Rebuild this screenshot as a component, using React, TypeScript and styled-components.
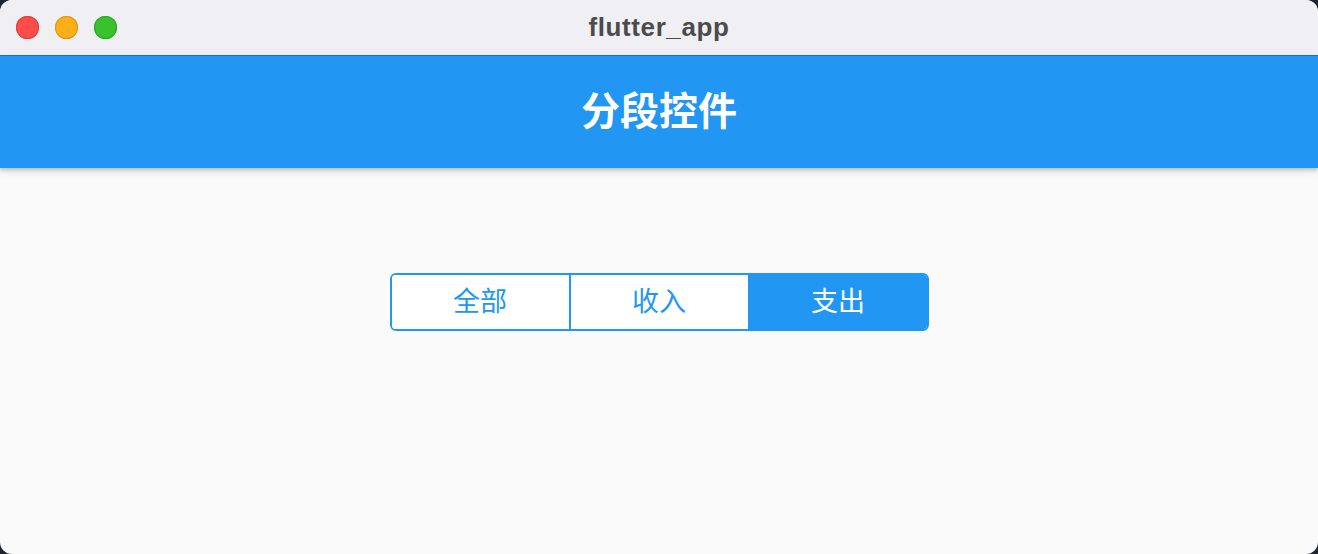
import React, { useState } from "react";
import styled, { createGlobalStyle } from "styled-components";

const Global = createGlobalStyle`
  html, body { margin: 0; padding: 0; background: #1e2530; }
  body { font-family: "Noto Sans CJK SC", "Noto Sans", sans-serif; }
`;

const Window = styled.div`
  width: 1318px;
  height: 554px;
  border-radius: 12px;
  overflow: hidden;
  background: #fafafa;
  display: flex;
  flex-direction: column;
`;

const TitleBar = styled.div`
  height: 55px;
  flex: none;
  background: #efeff4;
  border-bottom: 1px solid #1b73c9;
  position: relative;
  display: flex;
  align-items: center;
  justify-content: center;
`;

const Lights = styled.div`
  position: absolute;
  left: 16px;
  top: 16px;
  display: flex;
  gap: 16px;
`;

const Light = styled.span<{ $c: string; $b: string }>`
  width: 23px;
  height: 23px;
  border-radius: 50%;
  background: ${(p) => p.$c};
  box-shadow: inset 0 0 0 1px ${(p) => p.$b};
`;

const WinTitle = styled.div`
  font-family: "Liberation Sans", Arial, sans-serif;
  font-weight: 700;
  font-size: 26px;
  color: #4b4b4d;
  letter-spacing: 0.6px;
`;

const AppBar = styled.div`
  height: 112px;
  flex: none;
  box-sizing: border-box;
  padding-bottom: 7px;
  background: #2196f3;
  box-shadow: 0 2px 4px rgba(0, 0, 0, 0.2), 0 4px 8px rgba(0, 0, 0, 0.08);
  display: flex;
  align-items: center;
  justify-content: center;
  position: relative;
  z-index: 1;
`;

const AppTitle = styled.h1`
  margin: 0;
  font-family: "Noto Sans CJK SC", sans-serif;
  font-weight: 700;
  font-size: 39px;
  line-height: 1;
  color: #ffffff;
`;

const Body = styled.div`
  flex: 1;
  display: flex;
  justify-content: center;
  padding-top: 105px;
`;

const Segmented = styled.div`
  display: flex;
  height: 58px;
  border: 2px solid #2196f3;
  border-radius: 6px;
  overflow: hidden;
  box-sizing: border-box;
`;

const Segment = styled.button<{ $active: boolean; $first: boolean }>`
  width: 179px;
  height: 100%;
  border: none;
  border-left: ${(p) => (p.$first ? "none" : "2px solid #2196f3")};
  background: ${(p) => (p.$active ? "#2196f3" : "#ffffff")};
  color: ${(p) => (p.$active ? "#ffffff" : "#2196f3")};
  font-family: "Noto Sans CJK SC", sans-serif;
  font-size: 27px;
  line-height: 1;
  padding: 0 0 5px;
  cursor: pointer;
  display: flex;
  align-items: center;
  justify-content: center;
  &:first-child { width: 177px; }
`;

const items = ["全部", "收入", "支出"];

export default function App() {
  const [sel, setSel] = useState(2);
  return (
    <>
      <Global />
      <Window>
        <TitleBar>
          <Lights>
            <Light $c="#fe4c4a" $b="#e0403e" />
            <Light $c="#fdaf19" $b="#de9714" />
            <Light $c="#38c22b" $b="#2ea823" />
          </Lights>
          <WinTitle>flutter_app</WinTitle>
        </TitleBar>
        <AppBar>
          <AppTitle>分段控件</AppTitle>
        </AppBar>
        <Body>
          <Segmented>
            {items.map((t, i) => (
              <Segment key={t} $active={sel === i} $first={i === 0} onClick={() => setSel(i)}>
                {t}
              </Segment>
            ))}
          </Segmented>
        </Body>
      </Window>
    </>
  );
}
